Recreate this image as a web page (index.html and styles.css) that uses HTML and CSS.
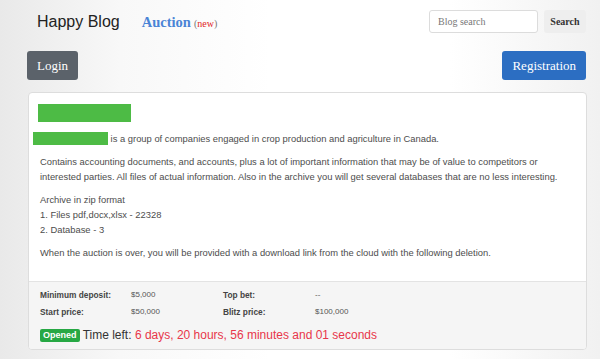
FILE: index.html
```html
<!DOCTYPE html>
<html lang="en">
<head>
    <meta charset="UTF-8">
    <meta name="viewport" content="width=device-width, initial-scale=1.0">
    <title>Happy Blog - Auction</title>
    <link rel="stylesheet" href="styles.css">
</head>
<body>
    <div class="container">
        <div class="topbar">
            <div class="brand">
                <span class="logo">Happy Blog</span>
                <a class="nav-link" href="#">Auction</a>
                <span class="new">(<em>new</em>)</span>
            </div>
            <form class="search">
                <input type="text" placeholder="Blog search">
                <button type="button">Search</button>
            </form>
        </div>
        <div class="actions">
            <button class="btn btn-gray">Login</button>
            <button class="btn btn-blue">Registration</button>
        </div>
        <div class="card">
            <div class="card-body">
                <div class="title-mark"></div>
                <p><span class="name-mark"></span> is a group of companies engaged in crop production and agriculture in Canada.</p>
                <p>Contains accounting documents, and accounts, plus a lot of important information that may be of value to competitors or interested parties. All files of actual information. Also in the archive you will get several databases that are no less interesting.</p>
                <p>Archive in zip format<br>1. Files pdf,docx,xlsx - 22328<br>2. Database - 3</p>
                <p>When the auction is over, you will be provided with a download link from the cloud with the following deletion.</p>
            </div>
            <div class="card-footer">
                <div class="stats">
                    <b>Minimum deposit:</b><span>$5,000</span>
                    <b>Top bet:</b><span>--</span>
                    <b>Start price:</b><span>$50,000</span>
                    <b>Blitz price:</b><span>$100,000</span>
                </div>
                <div class="timer">
                    <span class="badge">Opened</span>
                    Time left: <span class="left">6 days, 20 hours, 56 minutes and 01 seconds</span>
                </div>
            </div>
        </div>
    </div>
</body>
</html>
```

FILE: styles.css
```css
body {
    margin: 0;
    font-family: "Liberation Sans", Arial, sans-serif;
    color: #555;
    background: linear-gradient(to right, #e9e9e9 0%, #f8f8f8 20%, #fff 45%, #fff 75%, #f1f1f1 100%);
    height: 359px;
}
.container {
    width: 559px;
    margin-left: 27px;
}
.topbar {
    display: flex;
    justify-content: space-between;
    align-items: center;
    padding-top: 10px;
    height: 23px;
}
.brand {
    display: flex;
    align-items: baseline;
    padding-left: 10px;
}
.logo {
    font-size: 16px;
    color: #222;
}
.nav-link {
    margin-left: 22px;
    font-family: "Liberation Serif", serif;
    font-weight: bold;
    font-size: 14.5px;
    color: #4a84d6;
    text-decoration: none;
}
.new {
    margin-left: 3px;
    font-family: "Liberation Serif", serif;
    font-size: 10px;
    color: #777;
}
.new em {
    font-style: normal;
    color: #e02424;
}
.search {
    display: flex;
    gap: 6px;
    margin: 0;
}
.search input {
    width: 109px;
    height: 23px;
    box-sizing: border-box;
    border: 1px solid #dcdcdc;
    border-radius: 3px;
    padding: 0 8px;
    font-family: "Liberation Serif", serif;
    font-size: 10px;
    color: #555;
}
.search input::placeholder {
    color: #777;
}
.search button {
    width: 42px;
    height: 23px;
    border: none;
    border-radius: 3px;
    background: #eee;
    font-family: "Liberation Serif", serif;
    font-weight: bold;
    font-size: 10px;
    color: #333;
    padding: 0;
}
.actions {
    display: flex;
    justify-content: space-between;
    margin-top: 18px;
}
.btn {
    height: 29px;
    border: none;
    border-radius: 3px;
    color: #fff;
    font-family: "Liberation Serif", serif;
    font-size: 13px;
    padding: 0 10px;
}
.btn-gray {
    background: #5b626a;
}
.btn-blue {
    background: #2c6ec2;
}
.card {
    margin: 12px 0 0 1px;
    width: 557px;
    border: 1px solid #ddd;
    border-radius: 4px;
    background: #fff;
    overflow: hidden;
}
.card-body {
    padding: 11px 12px 21px 11px;
    font-size: 9.4px;
    line-height: 15px;
    color: #4d4d4d;
}
.title-mark {
    width: 93px;
    height: 18px;
    margin-left: -2px;
    background: #4dbb45;
    margin-bottom: 9px;
}
.name-mark {
    display: inline-block;
    width: 75px;
    height: 13px;
    margin-left: -7px;
    background: #4dbb45;
    vertical-align: -3px;
}
.card-body p {
    margin: 8px 0 0;
}
.card-body p:first-of-type {
    margin-top: 0;
}
.card-footer {
    border-top: 1px solid #e3e3e3;
    background: #f5f5f5;
    padding: 4px 11px 6px;
}
.stats {
    display: grid;
    grid-template-columns: 91px 92px 92px auto;
    grid-auto-rows: 17px;
    align-items: center;
    font-size: 8px;
    color: #555;
}
.stats b {
    font-size: 8.3px;
    color: #444;
}
.timer {
    margin-top: 7px;
    font-size: 12px;
    line-height: 16px;
    color: #333;
}
.badge {
    display: inline-block;
    background: #27a844;
    color: #fff;
    font-size: 9px;
    font-weight: bold;
    line-height: 13px;
    padding: 0 3px;
    border-radius: 2px;
    vertical-align: 1px;
}
.left {
    color: #e8364a;
}
```
